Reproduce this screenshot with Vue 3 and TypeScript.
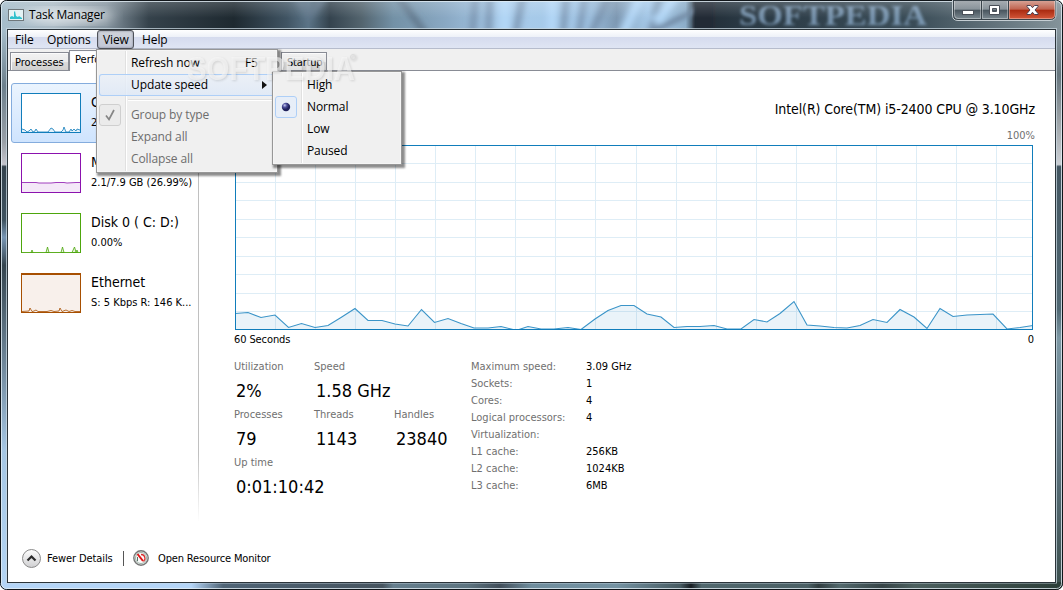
<script setup lang="ts">
import { ref, computed } from 'vue'

interface Resource {
    name: string;
    detail: string;
    color: string;
    fill: string;
    points: string;
}

const menus = ['File', 'Options', 'View', 'Help'];
const openMenu = ref<string>('View');

const speeds = ['High', 'Normal', 'Low', 'Paused'];
const speed = ref<string>('Normal');

const selected = ref<number>(0);
const resources: Resource[] = [
    { name: 'CPU', detail: '2% 1.58 GHz', color: '#117dbb', fill: '#e4f1f9', points: '1,36 4,37 6,39 8,38 10,36 12,39 14,38 15,36 17,39 27,39 30,35 32,36 34,39 40,39 42,37 43,34 45,39 48,39 50,36 51,38 53,36 55,38 56,36 59,37' },
    { name: 'Memory', detail: '2.1/7.9 GB (26.99%)', color: '#8b12ae', fill: '#f4e8f8', points: '1,29.5 15,29.5 18,30 30,30 35,29.5 43,29.5 46,30 55,29.5 59,29.5' },
    { name: 'Disk 0 ( C: D:)', detail: '0.00%', color: '#4da60c', fill: '#e6f4dc', points: '1,39.5 10,39.5 11,37 12,39.5 25,39.5 26.5,34 28,39.5 40,39.5 41.5,34 43,39.5 51,39.5 53.5,34 55,39 56,37 57,39.5 59,39.5' },
    { name: 'Ethernet', detail: 'S: 5 Kbps R: 146 K...', color: '#a74f01', fill: '#f8f0eb', points: '1,38.5 8,38 9,35 11,38.5 13,38 15,37 17,38.5 26,38.5 30,37.5 33,38.5 38,38 39,35 41,38.5 45,37 48,38.5 51,37.5 54,38.5 59,38.5' },
];

// cpu load, x and y inside the 798x185 graph
const samples: [number, number][] = [
    [0, 168.5], [13, 167.5], [26, 172.5], [40, 170], [53.5, 182.5], [66.5, 178.5], [80, 182.5], [93, 180.5],
    [106, 172.5], [120, 163.5], [133, 175.5], [147, 175.5], [160, 179], [173, 181], [186.5, 164.5], [199.5, 177.5],
    [213, 173.5], [226, 178.5], [239, 183], [253, 183], [266, 181.5], [278, 184.5], [284, 184.5], [293, 181.5],
    [306, 184], [319, 184], [333, 182.5], [346, 184.5], [360, 174], [373, 165.5], [386, 160.5], [399, 160.5],
    [412, 169], [426, 172], [439, 182.5], [452, 181.5], [465, 181.5], [479, 180.5], [492, 184], [506, 184],
    [519, 174.5], [532, 177], [545, 168.5], [559, 156.5], [572, 180], [585, 181], [599, 182.5], [612, 183],
    [625, 180.5], [638, 174.5], [652, 177.5], [665, 164.5], [679, 172], [692, 183.5], [705, 163.5], [718, 171.5],
    [732, 170], [745, 169.5], [758, 169], [772, 184], [785, 182.5], [798, 180.5],
];
const line = computed(() => samples.map(p => p.join(',')).join(' '));
const area = computed(() => `0,185 ${line.value} 798,185`);

const columns = [40, 80, 120, 160, 200, 240, 280, 320, 360, 401, 441, 481, 521, 561, 601, 641, 681, 721, 761];
const rows = [18, 37, 55, 74, 92, 111, 129, 148, 166];

const stats = [
    [{ label: 'Utilization', value: '2%' }, { label: 'Speed', value: '1.58 GHz' }],
    [{ label: 'Processes', value: '79' }, { label: 'Threads', value: '1143' }, { label: 'Handles', value: '23840' }],
    [{ label: 'Up time', value: '0:01:10:42' }],
];

const specs = [
    { label: 'Maximum speed:', value: '3.09 GHz' },
    { label: 'Sockets:', value: '1' },
    { label: 'Cores:', value: '4' },
    { label: 'Logical processors:', value: '4' },
    { label: 'Virtualization:', value: '' },
    { label: 'L1 cache:', value: '256KB' },
    { label: 'L2 cache:', value: '1024KB' },
    { label: 'L3 cache:', value: '6MB' },
];
</script>

<template>
    <div class="window">
        <svg class="glass" width="1063" height="590">
            <defs>
                <linearGradient id="top">
                    <stop offset="0" stop-color="#a5bdcb" />
                    <stop offset=".05" stop-color="#adbcc6" />
                    <stop offset=".1" stop-color="#8695a0" />
                    <stop offset=".14" stop-color="#35424b" />
                    <stop offset=".22" stop-color="#1e2930" />
                    <stop offset=".27" stop-color="#405463" />
                    <stop offset=".29" stop-color="#5b7487" />
                    <stop offset=".31" stop-color="#34434e" />
                    <stop offset=".34" stop-color="#53646e" />
                    <stop offset=".37" stop-color="#7391a6" />
                    <stop offset=".42" stop-color="#8aa9c4" />
                    <stop offset=".47" stop-color="#a8cbea" />
                    <stop offset=".55" stop-color="#a4c8e8" />
                    <stop offset=".58" stop-color="#7d98b2" />
                    <stop offset=".61" stop-color="#a8ccec" />
                    <stop offset=".645" stop-color="#8daec9" />
                    <stop offset=".655" stop-color="#202b35" />
                    <stop offset=".7" stop-color="#2a3944" />
                    <stop offset=".86" stop-color="#3a4c57" />
                    <stop offset="1" stop-color="#85949b" />
                </linearGradient>
                <linearGradient id="bottom">
                    <stop offset="0" stop-color="#b4d5f7" />
                    <stop offset=".18" stop-color="#b4d5f7" />
                    <stop offset=".21" stop-color="#4f6476" />
                    <stop offset=".36" stop-color="#46545f" />
                    <stop offset=".37" stop-color="#667f8e" />
                    <stop offset=".44" stop-color="#5d7480" />
                    <stop offset=".47" stop-color="#414e5a" />
                    <stop offset=".5" stop-color="#6f8d9d" />
                    <stop offset=".58" stop-color="#7492a2" />
                    <stop offset=".64" stop-color="#475b62" />
                    <stop offset=".65" stop-color="#171d22" />
                    <stop offset=".66" stop-color="#51686e" />
                    <stop offset=".76" stop-color="#4b6065" />
                    <stop offset=".77" stop-color="#303d40" />
                    <stop offset=".79" stop-color="#53696d" />
                    <stop offset=".83" stop-color="#354346" />
                    <stop offset=".86" stop-color="#4c605f" />
                    <stop offset="1" stop-color="#2b3d38" />
                </linearGradient>
                <linearGradient id="left" x2="0" y2="1">
                    <stop offset="0" stop-color="#a5bdcb" />
                    <stop offset=".1" stop-color="#6d808c" />
                    <stop offset=".2" stop-color="#99a0a7" />
                    <stop offset=".24" stop-color="#c4c4cc" />
                    <stop offset=".244" stop-color="#34424d" />
                    <stop offset=".34" stop-color="#3f5360" />
                    <stop offset=".37" stop-color="#7896b4" />
                    <stop offset=".42" stop-color="#35454f" />
                    <stop offset=".6" stop-color="#71899c" />
                    <stop offset=".75" stop-color="#a5c6e3" />
                    <stop offset="1" stop-color="#b4d5f4" />
                </linearGradient>
                <linearGradient id="right" x2="0" y2="1">
                    <stop offset="0" stop-color="#87969d" />
                    <stop offset=".08" stop-color="#66757d" />
                    <stop offset=".16" stop-color="#9ba2a6" />
                    <stop offset=".24" stop-color="#cbcfd4" />
                    <stop offset=".244" stop-color="#435661" />
                    <stop offset=".5" stop-color="#506873" />
                    <stop offset=".55" stop-color="#7d98a4" />
                    <stop offset=".75" stop-color="#5d7480" />
                    <stop offset="1" stop-color="#3b4e4c" />
                </linearGradient>
                <linearGradient id="shine" x2="0" y2="1">
                    <stop offset="0" stop-color="#fff" stop-opacity=".2" />
                    <stop offset=".6" stop-color="#fff" stop-opacity="0" />
                </linearGradient>
                <filter id="soft"><feGaussianBlur stdDeviation="1.5" /></filter>
                <filter id="strands"><feGaussianBlur stdDeviation="3.5 2" /></filter>
                <filter id="softer"><feGaussianBlur stdDeviation="8 5" /></filter>
            </defs>
            <rect width="1063" height="590" fill="url(#top)" />
            <g filter="url(#strands)" fill="none">
                <path d="M393 -10L430 40M295 -10l14 28l14-20" stroke="#5e7488" stroke-width="6" />
                <path d="M476 -10l-4 50M490 -10l-2 50M524 -10l-10 50M567 -10l-5 50M586 -10l-8 50M612 -10l-24 50M662 -10l-14 50M700 8l-50 25" stroke="#6f87a2" stroke-width="5" />
                <path d="M644 -10l-24 50M505 -10v50M552 -10v50M680 -10l-24 32" stroke="#b4d8f8" stroke-width="9" />
            </g>
            <rect x="694" width="20" height="30" fill="#202b35" filter="url(#soft)" />
            <rect y="30" width="8" height="560" fill="url(#left)" />
            <rect x="1055" y="30" width="8" height="560" fill="url(#right)" />
            <rect y="582" width="1063" height="8" fill="url(#bottom)" />
            <ellipse cx="67" cy="16" rx="46" ry="8" fill="#fff" opacity=".55" filter="url(#softer)" />
            <text x="739" y="25" class="title-mark" textLength="188" lengthAdjust="spacingAndGlyphs" filter="url(#soft)">SOFTPEDIA</text>
            <rect width="1063" height="30" fill="url(#shine)" />
            <path d="M0 0H8Q0 0 0 8zM1063 0H1055Q1063 0 1063 8zM0 590V582Q0 590 8 590zM1063 590V582Q1063 590 1055 590z" fill="#fff" />
            <rect x=".5" y=".5" width="1062" height="589" rx="6" fill="none" stroke="#11161a" />
            <rect x="1.5" y="1.5" width="1060" height="587" rx="5" fill="none" stroke="#e2edf5" stroke-opacity=".8" />
            <rect x="6.5" y="28.5" width="1050" height="554.5" fill="none" stroke="#c9d8e2" stroke-opacity=".75" />
        </svg>

        <header class="title-bar">
            <svg class="app-icon" width="16" height="12">
                <rect x=".5" y=".5" width="15" height="11" fill="#e5f3f5" stroke="#6f777b" />
                <path d="M2 10V8l2-1l2 1V3l1-1l1 5l2 1l1-1l3 2v1z" fill="#2fc1cd" />
            </svg>
            <span class="title">Task Manager</span>
            <svg class="caption" width="106" height="22">
                <defs>
                    <linearGradient id="btn" x2="0" y2="1">
                        <stop offset="0" stop-color="#a6acb1" />
                        <stop offset=".46" stop-color="#89939a" />
                        <stop offset=".5" stop-color="#48545d" />
                        <stop offset="1" stop-color="#7c8991" />
                    </linearGradient>
                    <linearGradient id="close" x2="0" y2="1">
                        <stop offset="0" stop-color="#d6a093" />
                        <stop offset=".46" stop-color="#c0634f" />
                        <stop offset=".5" stop-color="#a92a10" />
                        <stop offset="1" stop-color="#d4583a" />
                    </linearGradient>
                </defs>
                <path d="M.5 0V15Q.5 20.500 6 20.500H98Q104 20.500 104 15V0" fill="#39434a" stroke="#c5ced3" />
                <path d="M2 1H29V19H6Q2 19 2 15z" fill="url(#btn)" />
                <path d="M30 1H56V19H30z" fill="url(#btn)" />
                <path d="M57 1H103V15Q103 19 98 19H57z" fill="url(#close)" />
                <path d="M2.500 1V15Q2.500 18.500 6 18.500H28.500V1M30.500 1V18.500H55.500V1M57.500 1V18.500H98Q102.500 18.500 102.500 15V1" fill="none" stroke="#fff" stroke-opacity=".35" />
                <rect x="10.500" y="10.500" width="11" height="4" fill="#fff" stroke="#4a4f58" />
                <path d="M37.500 5.500h10v9h-10zM40.500 8.500h4v3h-4z" fill="#fff" fill-rule="evenodd" stroke="#4a4f58" />
                <path d="M75 5.500h3.500l2 2.200l2-2.200h3.500v1l-3 3.500l3 3.500v1h-3.500l-2-2.200l-2 2.200h-3.500v-1l3-3.500l-3-3.500z" fill="#fff" stroke="#4a4050" />
            </svg>
        </header>

        <div class="client">
            <nav class="menu-bar">
                <span v-for="menu in menus" :key="menu" class="menu" :class="['menu-' + menu.toLowerCase(), { open: menu === openMenu }]" @click="openMenu = menu">{{ menu }}</span>
            </nav>
            <div class="tabs">
                <span class="tab tab-processes">Processes</span>
                <span class="tab tab-active">Performance</span>
                <span class="tab tab-startup">Startup</span>
            </div>

            <main class="body">
                <aside class="sidebar">
                    <div v-for="(item, i) in resources" :key="item.name" class="resource" :class="{ selected: i === selected }" @click="selected = i">
                        <svg class="thumb" width="60" height="40">
                            <rect x=".5" y=".5" width="59" height="39" :fill="item.name === 'Ethernet' ? item.fill : '#fff'" :stroke="item.color" />
                            <path v-if="item.name === 'Ethernet'" d="M0 1H60" :stroke="item.color" stroke-width="2" />
                            <polygon :points="'1,39 ' + item.points + ' 59,39'" :fill="item.fill" />
                            <polyline :points="item.points" fill="none" :stroke="item.color" stroke-opacity=".8" />
                        </svg>
                        <div class="resource-text">
                            <span class="resource-name">{{ item.name }}</span>
                            <span class="resource-detail">{{ item.detail }}</span>
                        </div>
                    </div>
                </aside>

                <section class="details">
                    <div class="cpu-name">Intel(R) Core(TM) i5-2400 CPU @ 3.10GHz</div>
                    <div class="scale-top">100%</div>
                    <svg class="graph" width="798" height="185">
                        <rect width="798" height="185" fill="#fff" />
                        <path v-for="x in columns" :key="'c' + x" :d="`M${x + .5} 0V185`" stroke="#deedf6" />
                        <path v-for="y in rows" :key="'r' + y" :d="`M0 ${y + .5}H798`" stroke="#deedf6" />
                        <polygon :points="area" fill="#117dbb" fill-opacity=".09" />
                        <polyline :points="line" fill="none" stroke="#3a94c8" stroke-width="1.1" />
                        <rect x=".5" y=".5" width="797" height="184" fill="none" stroke="#117dbb" />
                    </svg>
                    <div class="scale-bottom"><span>60 Seconds</span><span>0</span></div>
                    <div class="numbers">
                        <div class="stats">
                            <div v-for="(row, i) in stats" :key="i" class="stat-row">
                                <div v-for="stat in row" :key="stat.label" class="stat">
                                    <span class="stat-label">{{ stat.label }}</span>
                                    <span class="stat-value">{{ stat.value }}</span>
                                </div>
                            </div>
                        </div>
                        <div class="specs">
                            <div v-for="spec in specs" :key="spec.label" class="spec">
                                <span class="spec-label">{{ spec.label }}</span>
                                <span>{{ spec.value }}</span>
                            </div>
                        </div>
                    </div>
                </section>
            </main>

            <footer class="footer">
                <svg width="20" height="20">
                    <defs>
                        <linearGradient id="round" x2="0" y2="1">
                            <stop offset="0" stop-color="#fefefe" />
                            <stop offset="1" stop-color="#cfcfd1" />
                        </linearGradient>
                    </defs>
                    <circle cx="10.500" cy="10.500" r="9" fill="url(#round)" stroke="#8a8a8a" />
                    <path d="M6.500 12.500l4-4l4 4" fill="none" stroke="#2b2b2b" stroke-width="2.200" />
                </svg>
                <span class="fewer">Fewer Details</span>
                <span class="divider"></span>
                <svg width="16" height="16">
                    <circle cx="8" cy="8" r="7.200" fill="#e9eeec" stroke="#777" stroke-width="1.400" />
                    <circle cx="8" cy="8" r="5.500" fill="#fafafa" stroke="#a2b5ab" />
                    <path d="M4.500 4l5.500 7" stroke="#e01515" stroke-width="2" />
                    <path d="M8 4.500q4 0 4 4.500l-1.500 2.500" fill="none" stroke="#d83030" stroke-width="1.300" />
                    <path d="M4.500 7v4" stroke="#5d7468" />
                </svg>
                <span class="monitor">Open Resource Monitor</span>
            </footer>
        </div>

        <div v-if="openMenu === 'View'" class="popup view-menu">
            <div class="item"><span class="label">Refresh now</span><span class="key">F5</span></div>
            <div class="item hover"><span class="label">Update speed</span><span class="arrow"></span></div>
            <div class="separator"></div>
            <div class="item disabled">
                <svg class="check" width="22" height="22">
                    <rect x=".5" y=".5" width="21" height="21" rx="2.500" fill="#ebebeb" stroke="#cfcfcf" />
                    <path d="M7 11.500l3 4l5-9.500" fill="none" stroke="#858585" stroke-width="1.700" />
                </svg>
                <span class="label">Group by type</span>
            </div>
            <div class="item disabled"><span class="label">Expand all</span></div>
            <div class="item disabled"><span class="label">Collapse all</span></div>
        </div>

        <div v-if="openMenu === 'View'" class="popup speed-menu">
            <div v-for="s in speeds" :key="s" class="item" @click="speed = s">
                <svg v-if="s === speed" class="check" width="22" height="22">
                    <defs>
                        <radialGradient id="ball" cx=".35" cy=".3">
                            <stop offset="0" stop-color="#c4c8ee" />
                            <stop offset=".5" stop-color="#4c4f9c" />
                            <stop offset="1" stop-color="#20225c" />
                        </radialGradient>
                    </defs>
                    <rect x=".5" y=".5" width="21" height="21" rx="2.500" fill="#e7eef8" stroke="#aecff7" />
                    <circle cx="11" cy="11" r="4.200" fill="url(#ball)" />
                </svg>
                <span class="label">{{ s }}</span>
            </div>
        </div>

        <svg class="watermark" width="184" height="40">
            <text x="4" y="27" textLength="168" lengthAdjust="spacingAndGlyphs">SOFTPEDIA</text>
            <circle cx="170" cy="4" r="2.500" fill="none" stroke="#dcdcdc" />
        </svg>
    </div>
</template>

<style>
body {
    margin: 0;
    overflow: hidden;
}
</style>

<style scoped>
.window {
    position: relative;
    display: flex;
    flex-direction: column;
    width: 1063px;
    height: 590px;
    overflow: hidden;
    font-family: "DejaVu Sans Condensed", "Noto Sans", sans-serif;
    font-size: 11px;
    color: #000;
    white-space: nowrap;
}

.glass {
    position: absolute;
    left: 0;
    top: 0;
}

.title-mark {
    font: bold 29px "Liberation Serif", serif;
    fill: #8fafce;
    opacity: .75;
}

.title-bar {
    position: relative;
    display: flex;
    align-items: flex-start;
    height: 29px;
    padding-left: 8px;
}

.app-icon {
    margin-top: 9px;
}

.title {
    margin: 6px 0 0 5px;
    font: 12px/18px "Open Sans", sans-serif;
    letter-spacing: -.2px;
}

.caption {
    margin: 0 5px 0 auto;
}

.client {
    position: relative;
    display: flex;
    flex-direction: column;
    width: 1047px;
    height: 552px;
    margin-left: 7px;
    border: 1px solid #2b343a;
    background: #fff;
}

.menu-bar {
    display: flex;
    box-sizing: border-box;
    height: 19px;
    background: linear-gradient(#fff 0, #edf1f8 7px, #d5dbee 7px, #dfe5f3 18px);
    border-bottom: 1px solid #b6bccc;
    font: 12px/20px "Open Sans", sans-serif;
    letter-spacing: -.1px;
}

.menu {
    box-sizing: border-box;
    height: 19px;
}

.menu-file {
    width: 32px;
    padding-left: 7px;
}

.menu-options {
    width: 57px;
    padding-left: 7px;
}

.menu-view {
    width: 37px;
    padding-left: 6px;
}

.menu-help {
    padding-left: 8px;
}

.open {
    padding-left: 5px;
    border: 1px solid #4f5259;
    border-radius: 3px;
    background: linear-gradient(#d0d3da, #c2c7d6);
    box-shadow: inset 0 0 2px #777d8c;
    line-height: 18px;
}

.tabs {
    display: flex;
    align-items: flex-end;
    box-sizing: border-box;
    height: 22px;
    padding-left: 2px;
    background: #f0f0f0;
    border-bottom: 1px solid #898c95;
}

.tab {
    box-sizing: border-box;
    height: 18px;
    border: 1px solid #898c95;
    border-bottom: 0;
    background: linear-gradient(#f2f2f2 0, #ebebeb 50%, #dcdcdc 50%, #d0d0d0);
    box-shadow: inset 1px 1px #fbfbfb;
    line-height: 20px;
}

.tab-processes {
    width: 59px;
    padding-left: 4px;
}

.tab-active {
    height: 21px;
    width: 86px;
    margin-bottom: -1px;
    padding-left: 5px;
    background: #fff;
    line-height: 18px;
}

.tab-startup {
    width: 46px;
    margin-left: 126px;
    padding-left: 5px;
    letter-spacing: -.2px;
}

.body {
    display: flex;
    height: 462px;
}

.sidebar {
    box-sizing: border-box;
    width: 191px;
    height: 450px;
    padding: 12px 0 0 3px;
    border-right: 1px solid;
    border-image: linear-gradient(#c0c0c0 85%, #fff) 1;
}

.resource {
    display: flex;
    box-sizing: border-box;
    height: 60px;
    padding: 10px 0 0 10px;
}

.selected {
    padding: 9px 0 0 9px;
    border: 1px solid #84acdd;
    border-radius: 3px;
    background: linear-gradient(#ebf4fe, #cfe4fe);
}

.resource-text {
    display: flex;
    flex-direction: column;
    margin-left: 10px;
}

.resource-name {
    font-size: 14px;
    line-height: 18px;
}

.resource-detail {
    line-height: 24px;
}

.details {
    width: 801px;
    padding-left: 36px;
}

.cpu-name {
    padding: 28px 1px 0 0;
    font-size: 14px;
    line-height: 20px;
    letter-spacing: -.1px;
    text-align: right;
}

.scale-top {
    padding: 9px 1px 0 0;
    line-height: 16px;
    text-align: right;
    color: #707070;
}

.graph {
    display: block;
    margin-top: 1px;
}

.scale-bottom {
    display: flex;
    justify-content: space-between;
    margin: 1px 2px 0 -1px;
    line-height: 18px;
    letter-spacing: -.1px;
}

.numbers {
    display: flex;
    padding-top: 9px;
    margin-left: -1px;
}

.stats {
    width: 237px;
}

.stat-row {
    display: flex;
    height: 48px;
}

.stat {
    display: flex;
    flex: none;
    flex-direction: column;
    width: 80px;
}

.stat-label {
    padding-top: 1px;
    line-height: 16px;
    color: #707070;
}

.stat-value {
    padding-left: 2px;
    font-size: 18px;
    line-height: 32px;
}

.spec {
    display: flex;
    line-height: 17px;
}

.spec-label {
    width: 115px;
    color: #707070;
}

.footer {
    display: flex;
    align-items: center;
    height: 20px;
    margin-top: 15px;
    padding-left: 13px;
    line-height: 22px;
}

.fewer {
    width: 76px;
    margin: 2px 0 0 6px;
    letter-spacing: -.1px;
}

.divider {
    width: 1px;
    height: 15px;
    margin-right: 9px;
    background: #555;
}

.monitor {
    margin: 2px 0 0 9px;
    letter-spacing: -.15px;
}

.popup {
    position: absolute;
    box-sizing: border-box;
    border: 1px solid #979797;
    background: linear-gradient(90deg, #f0f0f0 28px, #e0e0e0 28px, #e0e0e0 29px, #fff 29px, #fff 30px, #f0f0f0 30px);
    box-shadow: inset 0 0 0 1px #f5f5f5, 2px 2px 2px 1px rgba(0, 0, 0, .45);
    font: 12px/22px "Open Sans", sans-serif;
    letter-spacing: -.1px;
}

.view-menu {
    left: 96px;
    top: 49px;
    width: 182px;
    height: 124px;
    padding: 2px;
}

.speed-menu {
    left: 272px;
    top: 71px;
    width: 130px;
    height: 94px;
    padding: 2px;
}

.item {
    display: flex;
    align-items: center;
    height: 22px;
}

.label {
    margin-left: 32px;
}

.view-menu .label {
    width: 114px;
}

.check {
    flex: none;
    margin-right: -22px;
}

.hover {
    border-radius: 3px;
    background: linear-gradient(rgba(235, 240, 248, .8), rgba(221, 232, 247, .8));
    box-shadow: inset 0 0 0 1px #aecff7;
}

.arrow {
    margin-left: 17px;
    border: 4px solid transparent;
    border-left: 5px solid #111;
    border-right: 0;
}

.separator {
    height: 1px;
    margin: 3px 0 3px 29px;
    background: #e0e0e0;
    border-bottom: 1px solid #fff;
}

.disabled {
    color: #6d6d6d;
}

.watermark {
    position: absolute;
    left: 183px;
    top: 53px;
    overflow: visible;
    font: bold 34px "Liberation Sans", sans-serif;
    fill: #fafafa;
    fill-opacity: .6;
    filter: drop-shadow(1px 1px 1px rgba(0, 0, 0, .2));
}
</style>
